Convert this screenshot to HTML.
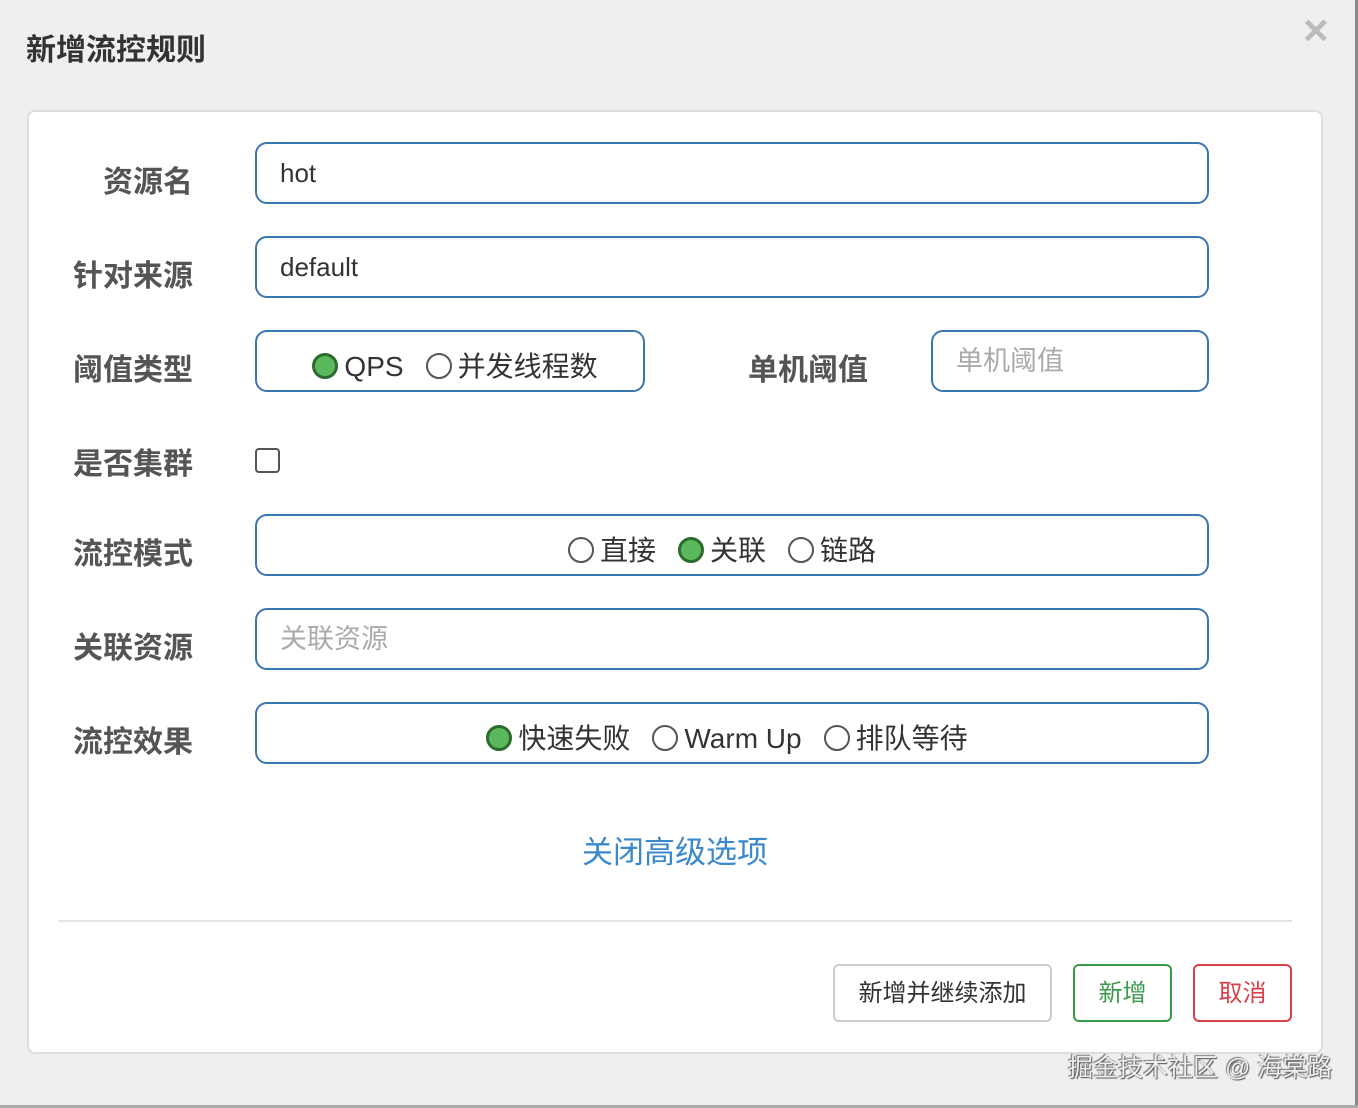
<!DOCTYPE html>
<html><head><meta charset="utf-8"><style>
*{box-sizing:border-box;margin:0;padding:0}
body{width:1358px;height:1108px;background:#efefef;font-family:"Liberation Sans","Noto Sans CJK SC",sans-serif;position:relative;overflow:hidden}
.a{position:absolute}
.title{left:26px;top:25px;font-size:30px;font-weight:bold;color:#333}
.close{left:1303px;top:6px;font-size:44px;color:#bbb;font-weight:bold}
.card{left:27px;top:110px;width:1296px;height:944px;background:#fff;border:2px solid #ddd;border-radius:8px}
.lbl{width:193px;text-align:right;font-size:30px;font-weight:bold;color:#555;left:0}
.inp{border:2px solid #3b76ad;border-radius:12px;height:62px;font-size:26px;color:#333;padding-left:23px;line-height:58px;background:#fff}
.ph{color:#aaa}
.rg{text-align:center;padding-left:0;font-size:28px;line-height:70px}
.r{display:inline-block;width:26px;height:26px;border:2px solid #555;border-radius:50%;vertical-align:-3px;margin-right:6px;background:#fff}
.r.on{background:#5cb85c;border:3px solid #2d6a2d}
.g{display:inline-block;width:22px}
.lk{left:0;width:1350px;text-align:center;top:827px;font-size:31px;color:#3a89cc}
.btn{top:964px;height:58px;border:2px solid #ccc;border-radius:6px;font-size:24px;text-align:center;line-height:56px;color:#333}
</style></head><body>
<div class="a title">新增流控规则</div>
<div class="a close">×</div>
<div class="a" style="right:0;top:0;width:3px;height:1108px;background:#888"></div>
<div class="a" style="left:0;bottom:0;width:1358px;height:3px;background:#aaa"></div>
<div class="a card"></div>
<div class="a lbl" style="top:157px">资源名</div>
<div class="a inp" style="left:255px;top:142px;width:954px">hot</div>
<div class="a lbl" style="top:251px">针对来源</div>
<div class="a inp" style="left:255px;top:236px;width:954px">default</div>
<div class="a lbl" style="top:345px">阈值类型</div>
<div class="a inp rg" style="left:255px;top:330px;width:390px;padding-left:10px"><span class="r on"></span>QPS<span class="g"></span><span class="r"></span>并发线程数</div>
<div class="a" style="left:748px;top:345px;font-size:30px;font-weight:bold;color:#555">单机阈值</div>
<div class="a inp ph" style="left:931px;top:330px;width:278px;font-size:27px">单机阈值</div>
<div class="a lbl" style="top:439px">是否集群</div>
<div class="a" style="left:255px;top:448px;width:25px;height:25px;border:2px solid #555;border-radius:4px"></div>
<div class="a lbl" style="top:529px">流控模式</div>
<div class="a inp rg" style="left:255px;top:514px;width:954px;padding-right:20px"><span class="r"></span>直接<span class="g"></span><span class="r on"></span>关联<span class="g"></span><span class="r"></span>链路</div>
<div class="a lbl" style="top:623px">关联资源</div>
<div class="a inp ph" style="left:255px;top:608px;width:954px;font-size:27px">关联资源</div>
<div class="a lbl" style="top:717px">流控效果</div>
<div class="a inp rg" style="left:255px;top:702px;width:954px;padding-right:10px"><span class="r on"></span>快速失败<span class="g"></span><span class="r"></span>Warm Up<span class="g"></span><span class="r"></span>排队等待</div>
<div class="a lk">关闭高级选项</div>
<div class="a" style="left:58px;top:920px;width:1234px;height:2px;background:#e5e5e5"></div>
<div class="a btn" style="left:833px;width:219px">新增并继续添加</div>
<div class="a btn" style="left:1073px;width:99px;border-color:#3a9a4a;color:#3a9a4a">新增</div>
<div class="a btn" style="left:1193px;width:99px;border-color:#d9404a;color:#d9404a">取消</div>
<div class="a" style="left:1068px;top:1048px;font-size:25px;color:#eee;text-shadow:1px 1px 1px #555,-1px -1px 1px #777">掘金技术社区 @ 海棠路</div>
</body></html>
